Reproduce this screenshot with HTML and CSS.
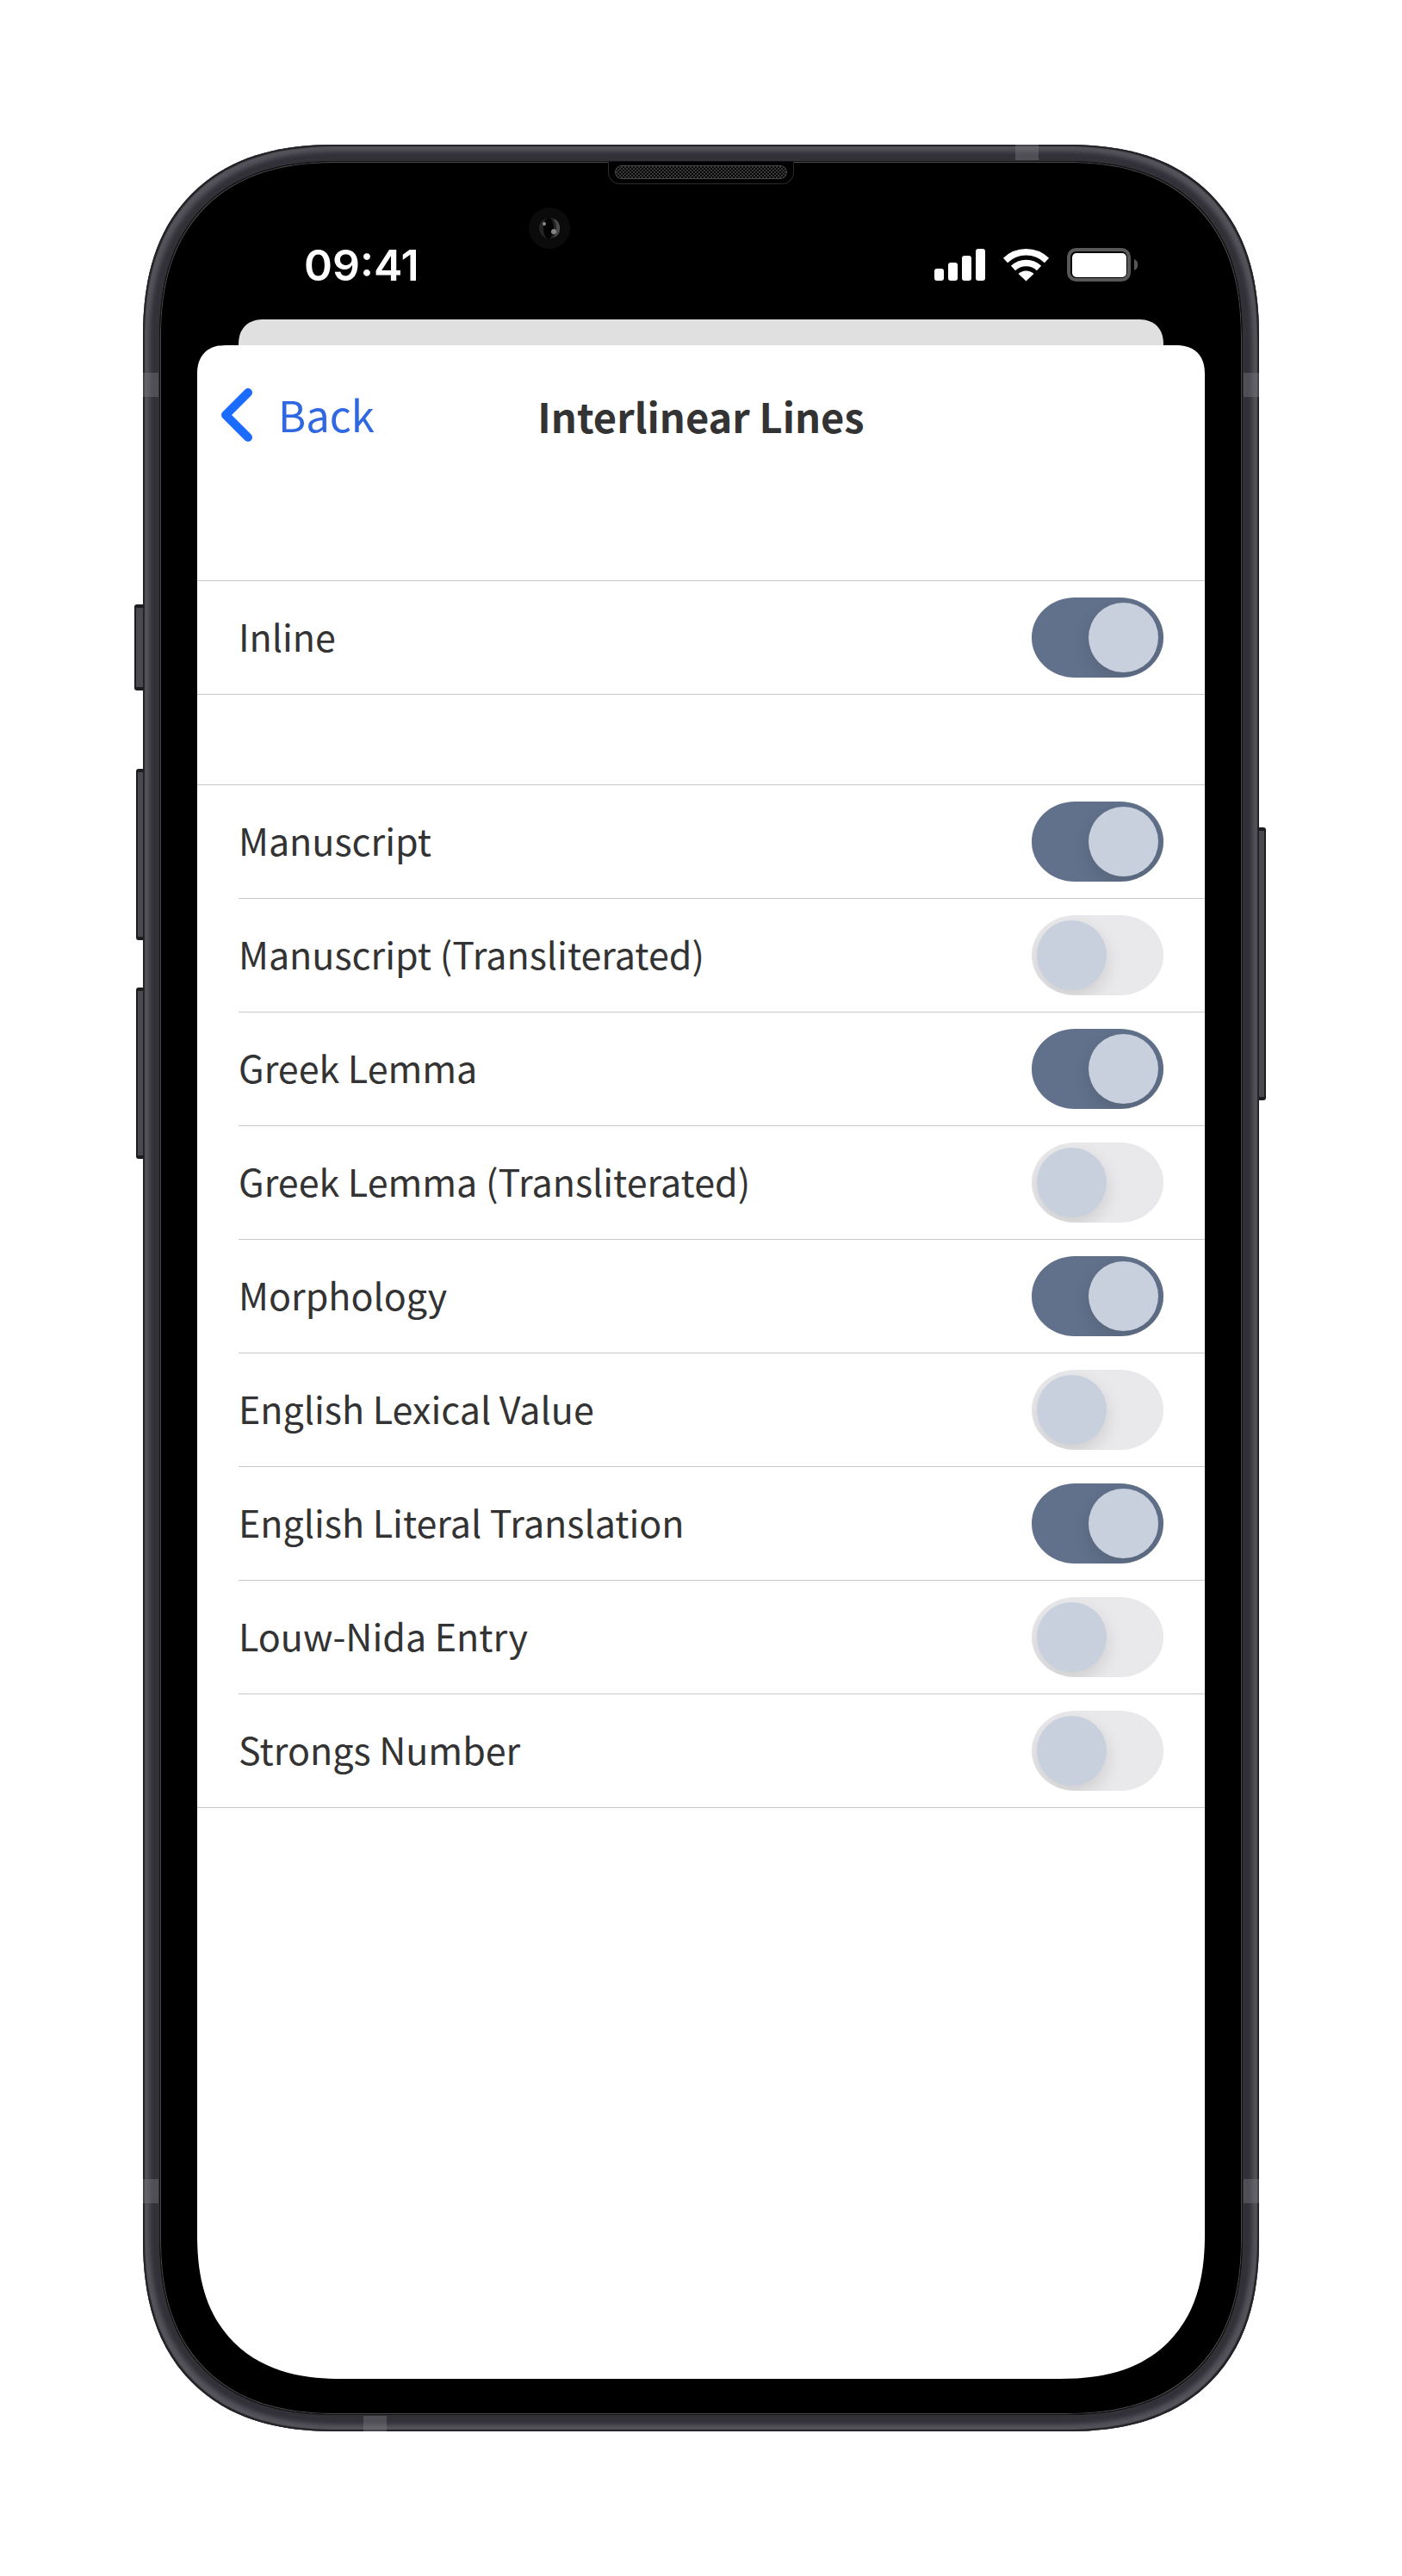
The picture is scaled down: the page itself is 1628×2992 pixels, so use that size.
FILE: index.html
```html
<!DOCTYPE html>
<html lang="en">
<head>
<meta charset="utf-8">
<meta name="viewport" content="width=device-width, initial-scale=1">
<title>Interlinear Lines</title>
<link rel="stylesheet" href="styles.css">
</head>
<body>
<div class="phone">
  <span class="key key-silent"></span>
  <span class="key key-up"></span>
  <span class="key key-down"></span>
  <span class="key key-power"></span>
  <span class="band band-left band-high"></span>
  <span class="band band-right band-high"></span>
  <span class="band band-left band-low"></span>
  <span class="band band-right band-low"></span>
  <span class="band band-top"></span>
  <span class="band band-bottom"></span>

  <div class="bezel">
    <div class="notch"><div class="grille"></div></div>
    <svg class="camera" viewBox="0 0 48 48" aria-hidden="true">
      <circle cx="24" cy="24" r="24" fill="#0b0b0b"/>
      <circle cx="24" cy="24" r="12" fill="#242424"/>
      <path d="M29 13a12 12 0 0 1 0 22 22 22 0 0 0 0-22Z" fill="#4a4a4a"/>
      <ellipse cx="23" cy="24" rx="6" ry="12" fill="#020202"/>
      <circle cx="18" cy="19" r="2" fill="#8a8a8a"/>
      <circle cx="29" cy="28" r="3" fill="#858585"/>
    </svg>

    <header class="status">
      <time class="clock">09:41</time>
      <svg class="indicators" viewBox="0 0 236 40" aria-hidden="true">
        <g fill="#fff">
          <rect x="0" y="24" width="11" height="14" rx="3"/>
          <rect x="16" y="17" width="11" height="21" rx="3"/>
          <rect x="32" y="9" width="11" height="29" rx="3"/>
          <rect x="48" y="1" width="11" height="37" rx="3"/>
          <path d="M106.500 38.500 97.500 30a13 13 0 0 1 18 0Z"/>
        </g>
        <g fill="none" stroke="#fff" stroke-width="7.500">
          <path d="M91.500 23.500a21.500 21.500 0 0 1 30 0"/>
          <path d="M82.500 14.500a34.500 34.500 0 0 1 48 0"/>
        </g>
        <rect x="156" y="2" width="70" height="35" rx="8.500" fill="none" stroke="#585858" stroke-width="4"/>
        <rect x="160" y="6" width="63" height="28" rx="5" fill="#fff"/>
        <path d="M232 13c6 3 6 10 0 13Z" fill="#585858"/>
      </svg>
    </header>

    <div class="sheet-behind"></div>
    <main class="sheet">
      <nav class="toolbar">
        <a class="back" href="#">
          <svg class="chevron" viewBox="0 0 36 62" aria-hidden="true"><path d="M31 5 5 31l26 26" fill="none" stroke="#1b6bff" stroke-width="10" stroke-linecap="round" stroke-linejoin="round"/></svg>
          <span>Back</span>
        </a>
        <h1 class="title">Interlinear Lines</h1>
      </nav>

      <section class="group">
        <label class="row"><span>Inline</span><input class="toggle" type="checkbox" role="switch" checked></label>
      </section>

      <section class="group">
        <label class="row"><span>Manuscript</span><input class="toggle" type="checkbox" role="switch" checked></label>
        <label class="row"><span>Manuscript (Transliterated)</span><input class="toggle" type="checkbox" role="switch"></label>
        <label class="row"><span>Greek Lemma</span><input class="toggle" type="checkbox" role="switch" checked></label>
        <label class="row"><span>Greek Lemma (Transliterated)</span><input class="toggle" type="checkbox" role="switch"></label>
        <label class="row"><span>Morphology</span><input class="toggle" type="checkbox" role="switch" checked></label>
        <label class="row"><span>English Lexical Value</span><input class="toggle" type="checkbox" role="switch"></label>
        <label class="row"><span>English Literal Translation</span><input class="toggle" type="checkbox" role="switch" checked></label>
        <label class="row"><span>Louw-Nida Entry</span><input class="toggle" type="checkbox" role="switch"></label>
        <label class="row"><span>Strongs Number</span><input class="toggle" type="checkbox" role="switch"></label>
      </section>
    </main>
  </div>
</div>
</body>
</html>
```
FILE: styles.css
```css
*, *::before, *::after { box-sizing: border-box; }

body {
  margin: 0;
  min-height: 100vh;
  padding: 168px 166px 168px;
  display: flex;
  background: #fff;
  color: #333;
  font-family: "Noto Sans CJK SC", "Noto Sans", sans-serif;
}

/* Device body */
.phone {
  position: relative;
  flex: 1;
  min-width: 0;
  display: flex;
  padding: 19px;
  border-radius: 195px;
  background: #323138;
  box-shadow: inset 0 0 1px 2px #222226, inset 0 0 5px 8px #55545b;
}

.bezel {
  position: relative;
  flex: 1;
  min-width: 0;
  display: flex;
  flex-direction: column;
  padding: 0 43px 41px;
  border: 1px solid #111;
  border-radius: 176px;
  background: #000;
  box-shadow: inset 0 0 0 1px #4a4a4c;
}

.key {
  position: absolute;
  left: -8px;
  width: 8px;
  border: 1px solid #1d1d20;
  border-width: 4px 0 4px 2px;
  border-radius: 3px 0 0 3px;
  background: #4a4950;
}
.key-silent { left: -10px; width: 10px; top: 534px; height: 100px; }
.key-up { top: 725px; height: 199px; }
.key-down { top: 979px; height: 199px; }
.key-power {
  left: auto;
  right: -8px;
  top: 793px;
  height: 317px;
  border-width: 4px 2px 4px 0;
  border-radius: 0 3px 3px 0;
}

.band {
  position: absolute;
  width: 18px;
  height: 28px;
  background: rgba(125, 125, 130, 0.4);
}
.band-left { left: 0; }
.band-right { right: 0; }
.band-high { top: 265px; }
.band-low { bottom: 265px; }
.band-top { top: 0; right: 256px; width: 27px; height: 18px; }
.band-bottom { bottom: 0; left: 256px; width: 27px; height: 18px; }

.notch {
  position: absolute;
  top: 0;
  left: 50%;
  width: 216px;
  height: 26px;
  margin-left: -108px;
  padding: 4px 7px;
  border: 1px solid #2a2a2a;
  border-top: 0;
  border-radius: 0 0 14px 14px;
  background: #000;
}
.grille {
  height: 16px;
  border: 1px solid #484848;
  border-radius: 8px;
  background: repeating-conic-gradient(#383838 0 25%, #080808 0 50%) 0 0 / 4px 4px;
}

.camera {
  position: absolute;
  top: 53px;
  left: 50%;
  width: 48px;
  height: 48px;
  margin-left: -200px;
}

/* Status bar */
.status {
  height: 183px;
  padding: 96px 78px 0 124px;
  display: flex;
  justify-content: space-between;
}
.clock {
  color: #fff;
  font: 600 50px/48px Inter, sans-serif;
}
.indicators {
  width: 236px;
  height: 40px;
  margin-top: 4px;
}

/* Sheets */
.sheet-behind {
  height: 30px;
  margin: 0 48px;
  border-radius: 28px 28px 0 0;
  background: #e0e0e0;
}
.sheet {
  flex: 1;
  display: flex;
  flex-direction: column;
  gap: 104px;
  border-radius: 30px 30px 138px 138px;
  background: #fff;
}

@supports (corner-shape: superellipse(1.25)) {
  .phone { border-radius: 225px; corner-shape: superellipse(1.25); }
  .bezel { border-radius: 206px; corner-shape: superellipse(1.25); }
  .sheet-behind { border-radius: 32px 32px 0 0; corner-shape: superellipse(1.25); }
  .sheet { border-radius: 34px 34px 168px 168px; corner-shape: superellipse(1.25); }
}

.toolbar {
  height: 169px;
  padding: 46px 28px 0;
  display: grid;
  grid-template-columns: 1fr auto 1fr;
  align-items: start;
}
.back {
  display: flex;
  align-items: center;
  gap: 30px;
  color: #2f68e0;
  font-size: 49px;
  line-height: 72px;
  text-decoration: none;
}
.chevron { width: 36px; height: 62px; }
.back span { margin-top: -2px; }
.title {
  margin: 0;
  font-size: 47px;
  font-weight: 600;
  line-height: 72px;
}

.group { border-top: 1px solid #c8c8cb; }

.row {
  height: 132px;
  margin-left: 48px;
  padding-right: 48px;
  display: flex;
  align-items: center;
  justify-content: space-between;
  border-bottom: 1px solid #c8c8cb;
  font-size: 43px;
  line-height: 64px;
}
.row span { padding-bottom: 6px; }
.row:last-child {
  margin-left: 0;
  padding-left: 48px;
}

.toggle {
  appearance: none;
  flex: none;
  width: 153px;
  height: 93px;
  margin: 0;
  padding: 6px;
  border-radius: 50px / 46px;
  background: #e9e9eb;
  overflow: hidden;
}
.toggle::before {
  content: "";
  display: block;
  width: 81px;
  height: 81px;
  border-radius: 50%;
  background: #c8cfdd;
  box-shadow: 0 8px 20px rgba(0, 0, 0, 0.12);
}
.toggle:checked { background: #62718b; }
.toggle:checked::before { margin-left: auto; }
```
